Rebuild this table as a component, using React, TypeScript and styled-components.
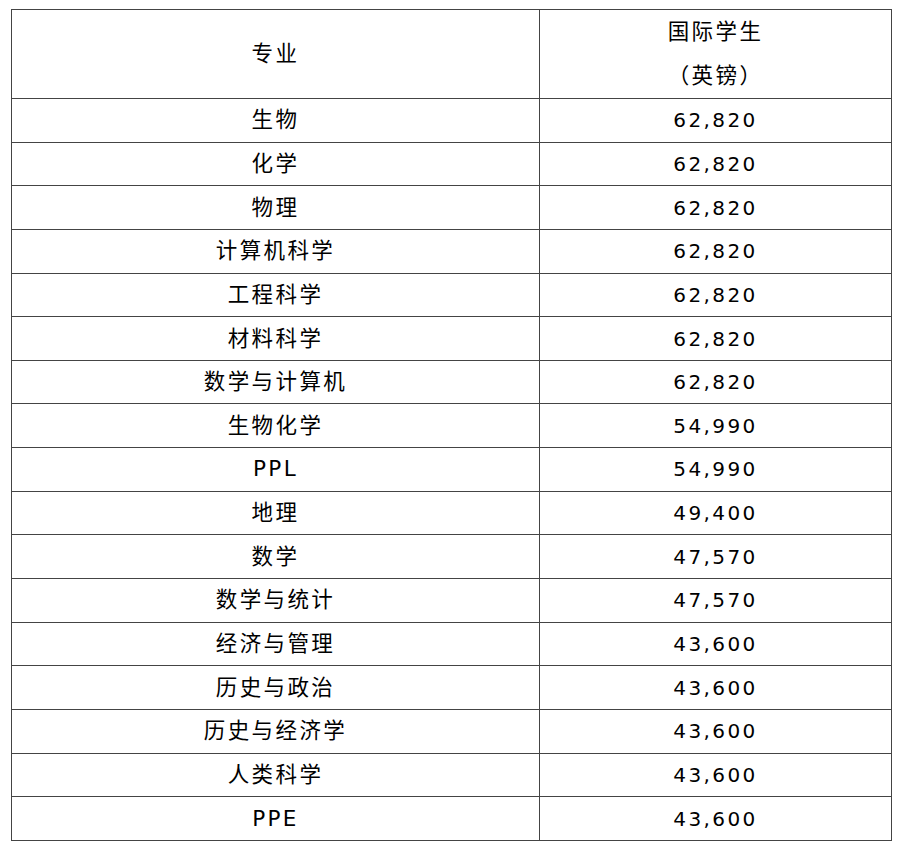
import styled, { createGlobalStyle } from 'styled-components'

const GlobalStyle = createGlobalStyle`
  html, body {
    margin: 0;
    background: #ffffff;
  }
  body {
    font-family: "DejaVu Sans", "Noto Sans CJK SC", sans-serif;
    color: #000000;
  }
`

const Page = styled.div`
  padding: 9px 0 0 11px;
`

const Table = styled.table`
  border-collapse: collapse;
  table-layout: fixed;
  width: 880px;
`

const HeadRow = styled.tr`
  height: 89px;
`

const Row = styled.tr`
  height: 43.65px;
`

const Cell = styled.td<{ $num?: boolean }>`
  border: 1px solid #444444;
  padding: 0;
  text-align: center;
  vertical-align: middle;
  font-size: ${(p) => (p.$num ? '20px' : '21.5px')};
  letter-spacing: 2.4px;
  line-height: 28px;
  white-space: nowrap;
`

const HeadCell = styled(Cell).attrs({ as: 'th' })`
  font-weight: normal;
  line-height: 44px;
`

const rows: [string, string][] = [
  ['生物', '62,820'],
  ['化学', '62,820'],
  ['物理', '62,820'],
  ['计算机科学', '62,820'],
  ['工程科学', '62,820'],
  ['材料科学', '62,820'],
  ['数学与计算机', '62,820'],
  ['生物化学', '54,990'],
  ['PPL', '54,990'],
  ['地理', '49,400'],
  ['数学', '47,570'],
  ['数学与统计', '47,570'],
  ['经济与管理', '43,600'],
  ['历史与政治', '43,600'],
  ['历史与经济学', '43,600'],
  ['人类科学', '43,600'],
  ['PPE', '43,600'],
]

export default function App() {
  return (
    <>
      <GlobalStyle />
      <Page>
        <Table>
          <colgroup>
            <col style={{ width: 528 }} />
            <col style={{ width: 352 }} />
          </colgroup>
          <thead>
            <HeadRow>
              <HeadCell>专业</HeadCell>
              <HeadCell>
                国际学生
                <br />
                （英镑）
              </HeadCell>
            </HeadRow>
          </thead>
          <tbody>
            {rows.map(([name, fee]) => (
              <Row key={name}>
                <Cell>{name}</Cell>
                <Cell $num>{fee}</Cell>
              </Row>
            ))}
          </tbody>
        </Table>
      </Page>
    </>
  )
}
